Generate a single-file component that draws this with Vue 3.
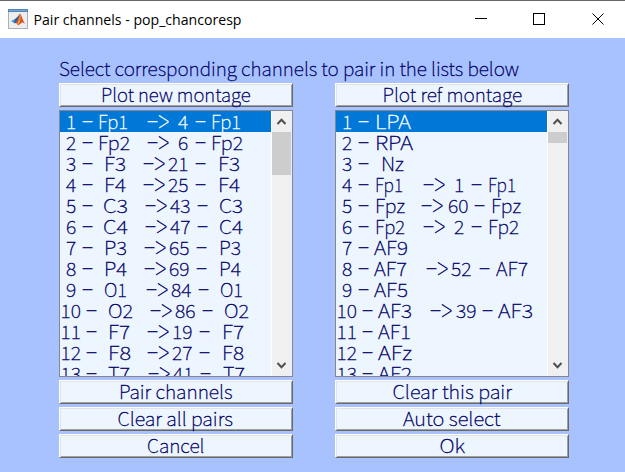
<script setup>
// Row: [number, dashX, label, labelX, labelWidth, arrowX, target, targetX, targetDashX, targetLabelX, targetLabelWidth]
const left = [
  ['1', 23, 'Fp1', 39, 28, 88, '4', 119, 136, 152, 28],
  ['2', 23, 'Fp2', 39, 30, 88, '6', 119, 136, 152, 30],
  ['3', 23, 'F3', 45, 20, 84, '21', 109, 136, 159, 20],
  ['4', 23, 'F4', 45, 20, 84, '25', 109, 136, 159, 20],
  ['5', 23, 'C3', 44, 23, 86, '43', 111, 138, 160, 22],
  ['6', 23, 'C4', 44, 23, 86, '47', 111, 138, 160, 22],
  ['7', 23, 'P3', 45, 21, 85, '65', 110, 137, 160, 20],
  ['8', 23, 'P4', 45, 21, 85, '69', 110, 137, 160, 20],
  ['9', 23, 'O1', 45, 21, 87, '84', 112, 139, 161, 21],
  ['10', 27, 'O2', 49, 23, 91, '86', 116, 143, 165, 23],
  ['11', 27, 'F7', 49, 20, 88, '19', 113, 140, 163, 20],
  ['12', 27, 'F8', 49, 21, 88, '27', 113, 140, 163, 20],
  ['13', 27, 'T7', 49, 20, 89, '41', 114, 141, 164, 20]
]
const right = [
  ['1', 23, 'LPA', 40, 34],
  ['2', 23, 'RPA', 40, 36],
  ['3', 23, 'Nz', 46, 21],
  ['4', 23, 'Fp1', 40, 26, 88, '1', 119, 136, 153, 26],
  ['5', 23, 'Fpz', 40, 28, 86, '60', 113, 139, 156, 28],
  ['6', 23, 'Fp2', 40, 28, 88, '2', 119, 136, 153, 29],
  ['7', 23, 'AF9', 39, 32],
  ['8', 23, 'AF7', 39, 31, 91, '52', 116, 144, 161, 30],
  ['9', 23, 'AF5', 39, 32],
  ['10', 27, 'AF3', 43, 32, 95, '39', 121, 147, 163, 33],
  ['11', 27, 'AF1', 43, 31],
  ['12', 27, 'AFz', 43, 32],
  ['13', 27, 'AF2', 43, 32]
]
const number = (t, x) => ({ t, x: x - 1, w: t.length > 1 ? 20.4 : 10.2, y: 18 })
const dash = (x) => ({ t: '-', x: x - 1.8, w: 12.5, y: 16.3, c: 'dash' })
const label = (t, x, w) => ({ t, x: x - 1, w: w + 2, y: 18 })
function tokens(r) {
  const out = [number(r[0], r[0].length > 1 ? 1.6 : 7), dash(r[1]), label(r[2], r[3], r[4])]
  if (r.length > 5) {
    out.push(dash(r[5]), { t: '>', x: r[5] + 10.2, w: 11, y: 23.2, c: 'angle' })
    out.push(number(r[6], r[7]), dash(r[8]), label(r[2], r[9], r[10]))
  }
  return out
}
const panes = [
  { top: ['Plot new montage', 43, 148], rows: left, thumb: 'long', bottom: [['Pair channels', 61, 112], ['Clear all pairs', 59.5, 114], ['Cancel', 89, 56]] },
  { top: ['Plot ref montage', 48.5, 138], rows: right, thumb: 'short', bottom: [['Clear this pair', 58.5, 118], ['Auto select', 69, 96], ['Ok', 105.5, 24]] }
]
</script>

<template>
  <div class="window">
    <header class="titlebar">
      <svg class="logo" width="20" height="20" viewBox="0 0 20 20">
        <rect x=".5" y=".5" width="19" height="19" fill="#eeeeee" stroke="#a9afb7" />
        <rect x="0" y="0" width="20" height="3" fill="#4e86b8" />
        <rect x="1" y="1" width="18" height="1" fill="#76a6cf" />
        <path d="M3 12 7.5 9.8 9 11.5 6.5 14.5Z" fill="#4aa0cd" />
        <path d="M7 10 9.8 7.5 12 4.5 10.5 10.5 8 14.5 6.2 13.3Z" fill="#365f91" />
        <path d="M12 4.5C13.5 6 15 12 17 14.8L14.2 13.2 10.3 16.5 8 13.8C10 12 11 8 12 4.5Z" fill="#d94f20" />
        <path d="M12 5C13 8 13 12 10.5 16L9.3 14C11 11 11.7 8 12 5Z" fill="#f39a37" />
      </svg>
      <svg class="title" width="214" height="36">
        <text x="-.5" y="24" textLength="208" lengthAdjust="spacingAndGlyphs">Pair channels - pop_chancoresp</text>
      </svg>
      <svg class="controls" width="134" height="12" shape-rendering="crispEdges" fill="none" stroke="#000">
        <path d="M0 5.5H12" />
        <path d="M58.5 .5H69.5V11.5H58.5Z" />
        <path d="M117.5 .5 128.5 11.5M128.5 .5 117.5 11.5" shape-rendering="auto" />
      </svg>
    </header>
    <main>
      <svg class="prompt" width="480" height="24">
        <text x="0" y="17" textLength="460" lengthAdjust="spacingAndGlyphs">Select corresponding channels to pair in the lists below</text>
      </svg>
      <div class="panes">
        <section v-for="p in panes" :key="p.thumb" class="pane">
          <button>
            <svg width="230" height="20"><text :x="p.top[1] - 3" y="17" :textLength="p.top[2] + 1.5" lengthAdjust="spacingAndGlyphs">{{ p.top[0] }}</text></svg>
          </button>
          <div class="listbox">
            <div class="rows">
              <div v-for="(r, i) in p.rows" :key="i" class="row" :class="{ selected: i === 0 }">
                <svg width="211" height="21">
                  <text v-for="(k, j) in tokens(r)" :key="j" :class="k.c" :x="k.x" :y="k.y" :textLength="k.w" lengthAdjust="spacingAndGlyphs">{{ k.t }}</text>
                </svg>
              </div>
            </div>
            <div class="scrollbar">
              <svg width="20" height="21" fill="none" stroke="#505050" stroke-width="2"><path d="M5.5 13 9.5 8.8 13.5 13" /></svg>
              <div class="thumb" :class="p.thumb"></div>
              <svg class="down" width="20" height="21" fill="none" stroke="#505050" stroke-width="2"><path d="M5.5 8 9.5 12.2 13.5 8" /></svg>
            </div>
          </div>
          <button v-for="b in p.bottom" :key="b[0]">
            <svg width="230" height="20"><text :x="b[1] - 3" y="17" :textLength="b[2] + 1.5" lengthAdjust="spacingAndGlyphs">{{ b[0] }}</text></svg>
          </button>
        </section>
      </div>
    </main>
  </div>
</template>

<style>
body { margin: 0; background: #a8c2ff; }
</style>

<style scoped>
.window { width: 625px; height: 472px; overflow: hidden; background: #a8c2ff; box-sizing: border-box; border-top: 1px solid #66666a; }
svg { display: block; flex: none; overflow: visible; }
.titlebar { height: 37px; background: #fff; display: flex; align-items: flex-start; }
.logo { margin: 8px 6px 0 8px; }
text { font: 100 18.5px "Noto Sans CJK JP", sans-serif; fill: #000066; stroke: #000066; stroke-width: .35px; white-space: pre; }
.title text { font: 15px "Open Sans", sans-serif; fill: #000; stroke: none; }
.controls { margin: 12px 0 0 227px; }
main { padding: 21px 0 0 59px; }
.panes { display: flex; gap: 42px; }
.pane { width: 234px; display: flex; flex-direction: column; gap: 3px; }
button { display: block; box-sizing: border-box; width: 234px; height: 24px; padding: 1px; margin: 0; border: 1px solid; border-color: #fff #696969 #696969 #fff; background: #edf5ff; box-shadow: inset 1px 1px #e3e3e3, inset -1px -1px #a0a0a0; border-radius: 0; }
.listbox { box-sizing: border-box; height: 267px; border: 1px solid #828790; background: #edf5ff; display: flex; overflow: hidden; }
.rows { width: 211px; height: 265px; overflow: hidden; }
.row { height: 21px; }
.selected { background: #0078d7; }
.selected text { fill: #fff; stroke: #fff; }
text.angle { font-size: 34px; stroke-width: .1px; }
.scrollbar { flex: 1; box-sizing: border-box; border-left: 1px solid #fff; background: #f0f0f0; display: flex; flex-direction: column; }
.thumb { background: #cdcdcd; width: 19px; }
.long { height: 43px; }
.short { height: 11px; }
.down { margin-top: auto; }
</style>
